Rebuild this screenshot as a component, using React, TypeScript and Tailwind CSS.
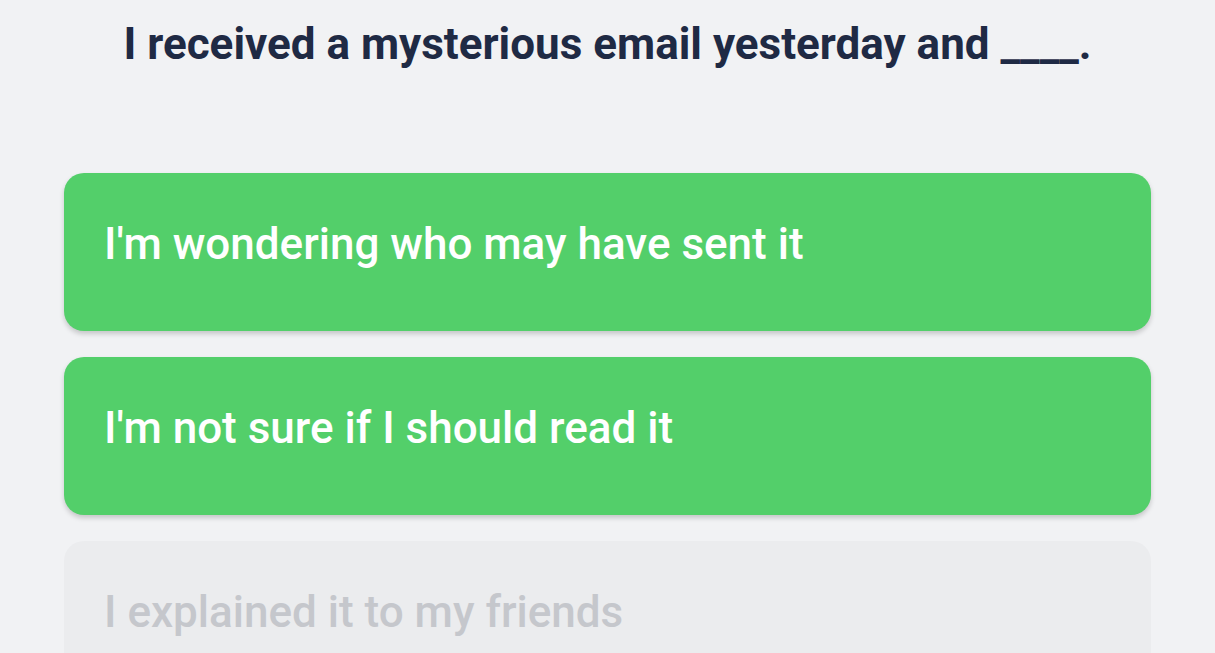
const options = [
  { text: "I'm wondering who may have sent it", active: true },
  { text: "I'm not sure if I should read it", active: true },
  { text: "I explained it to my friends", active: false },
];

export default function App() {
  return (
    <div
      className="h-[653px] w-full overflow-hidden bg-[#f1f2f4]"
      style={{ fontFamily: "Roboto, 'Liberation Sans', sans-serif" }}
    >
      <h1 className="pt-[16px] text-center text-[44px] font-bold leading-[56px] text-[#1f2a44]">
        I received a mysterious email yesterday and ____.
      </h1>
      <div className="mx-[64px] mt-[101px] flex flex-col gap-[26px]">
        {options.map((o) => (
          <div
            key={o.text}
            className={
              o.active
                ? "h-[158px] rounded-[20px] bg-[#53cf6a] px-[40px] pt-[43px] text-white shadow-[0_3px_5px_rgba(0,0,0,0.18)]"
                : "h-[158px] rounded-[20px] bg-[#ebecee] px-[40px] pt-[43px] text-[#c5c7cc]"
            }
          >
            <span className="text-[44px] font-medium leading-[56px]">{o.text}</span>
          </div>
        ))}
      </div>
    </div>
  );
}
